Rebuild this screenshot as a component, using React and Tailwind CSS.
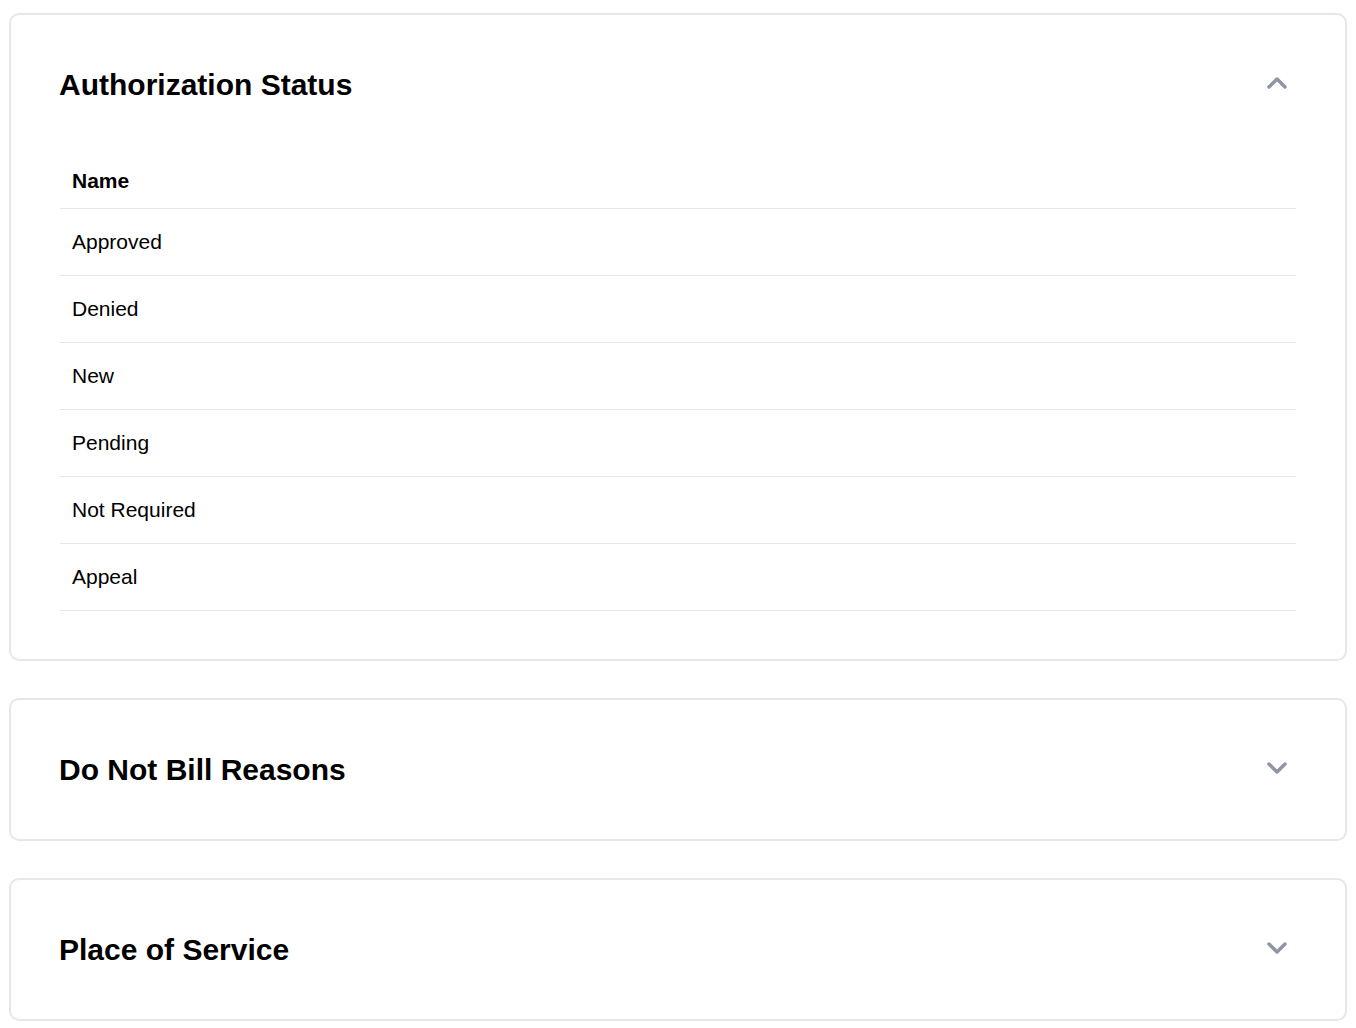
import { useState } from 'react';

const statuses = ['Approved', 'Denied', 'New', 'Pending', 'Not Required', 'Appeal'];

function Chevron({ open }) {
  return (
    <svg
      width="32"
      height="32"
      viewBox="0 0 24 24"
      fill="none"
      stroke="#8f95a3"
      strokeWidth="2.6"
      strokeLinecap="round"
      strokeLinejoin="round"
    >
      {open ? <path d="m18 15-6-6-6 6" /> : <path d="m6 9 6 6 6-6" />}
    </svg>
  );
}

function Section({ title, defaultOpen = false, children }) {
  const [open, setOpen] = useState(defaultOpen);
  return (
    <div className="rounded-[10px] border-2 border-[#e5e7eb] bg-white p-12">
      <div className="flex h-[43px] items-center justify-between">
        <h2 className="text-[30px] font-bold leading-9 text-black">{title}</h2>
        <button
          type="button"
          onClick={() => setOpen(!open)}
          className="-mt-1 flex h-10 w-10 items-center justify-center"
        >
          <Chevron open={open} />
        </button>
      </div>
      {open && children}
    </div>
  );
}

export default function App() {
  return (
    <div className="min-h-screen bg-white px-[9px] pb-2 pt-[13px] font-['Liberation_Sans',Arial,sans-serif] text-black">
      <div className="flex flex-col gap-[37px]">
        <Section title="Authorization Status" defaultOpen>
          <div className="mx-px mt-12">
            <div className="border-b border-[#e5e7eb] px-3 py-[13px] text-[21px] font-bold leading-7">
              Name
            </div>
            {statuses.map((s) => (
              <div key={s} className="border-b border-[#e5e7eb] px-3 py-[19px] text-[21px] leading-7">
                {s}
              </div>
            ))}
          </div>
        </Section>
        <Section title="Do Not Bill Reasons" />
        <Section title="Place of Service" />
      </div>
    </div>
  );
}
